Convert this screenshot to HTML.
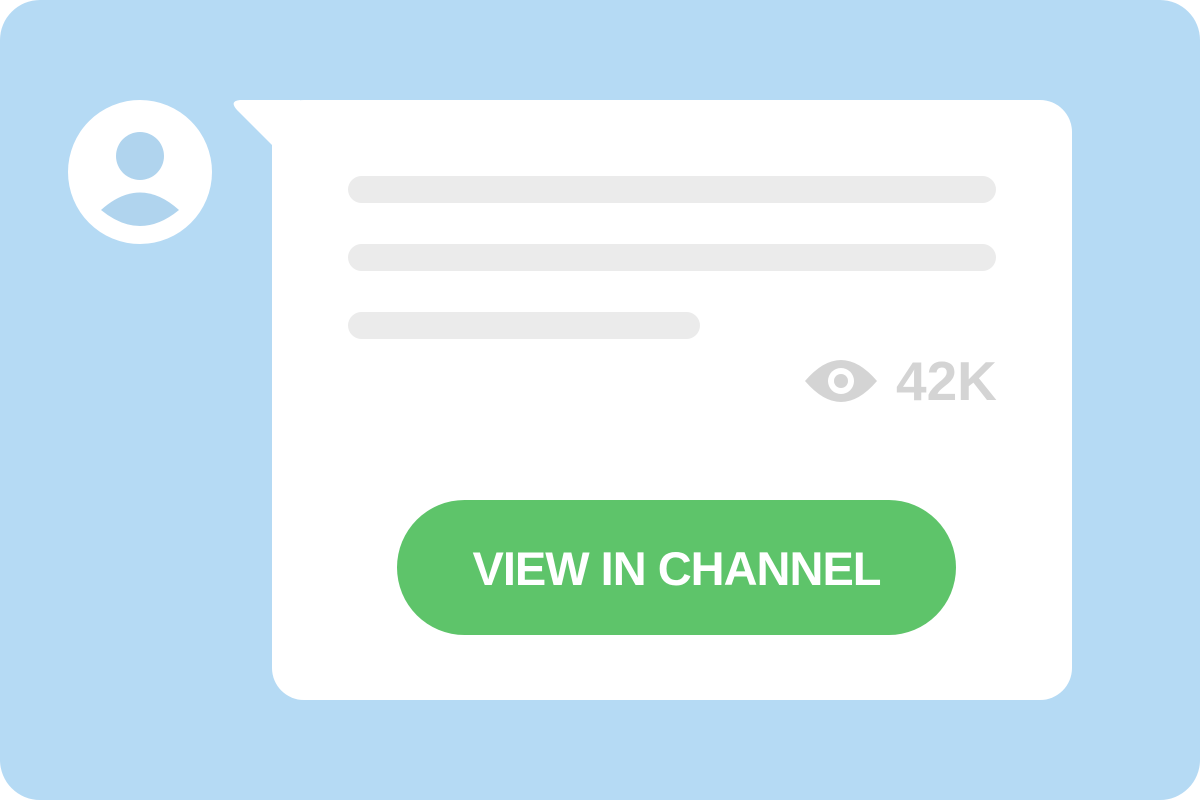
<!DOCTYPE html>
<html><head><style>
html,body{margin:0;padding:0;background:#fff;}
.bg{position:absolute;left:0;top:0;width:1200px;height:800px;background:#b5daf4;border-radius:40px;}
.bubble{position:absolute;left:272px;top:100px;width:800px;height:600px;background:#fff;border-radius:32px;}
.line{position:absolute;left:348px;height:27px;background:#ebebeb;border-radius:14px;}
.btn{position:absolute;left:397px;top:500px;width:559px;height:135px;background:#5ec46a;border-radius:68px;color:#fff;font:bold 47px "Liberation Sans",sans-serif;text-align:center;line-height:137px;letter-spacing:-1px;}
.views{position:absolute;left:896px;top:349px;font:bold 55px "Liberation Sans",sans-serif;color:#d4d4d4;}
</style></head><body>
<div class="bg"></div>
<svg style="position:absolute;left:0;top:0" width="1200" height="800">
<path d="M240 100 L300 100 L300 160 L272 145 L237 110 Q229 101 240 100Z" fill="#fff"/>
<circle cx="140" cy="172" r="72" fill="#fff"/>
<circle cx="140" cy="156" r="24" fill="#b0d4ee"/>
<path d="M101 210 Q140 175 179 210 Q140 242 101 210Z" fill="#b0d4ee"/>
</svg>
<div class="bubble"></div>
<div class="line" style="top:176px;width:648px"></div>
<div class="line" style="top:244px;width:648px"></div>
<div class="line" style="top:312px;width:352px"></div>
<svg style="position:absolute;left:804px;top:358px" width="74" height="46">
<path d="M1 23 Q37 -19 73 23 Q37 65 1 23Z" fill="#d4d4d4"/>
<circle cx="37" cy="23" r="13" fill="#fff"/>
<circle cx="37" cy="23" r="7" fill="#d4d4d4"/>
</svg>
<div class="views">42K</div>
<div class="btn">VIEW IN CHANNEL</div>
</body></html>
